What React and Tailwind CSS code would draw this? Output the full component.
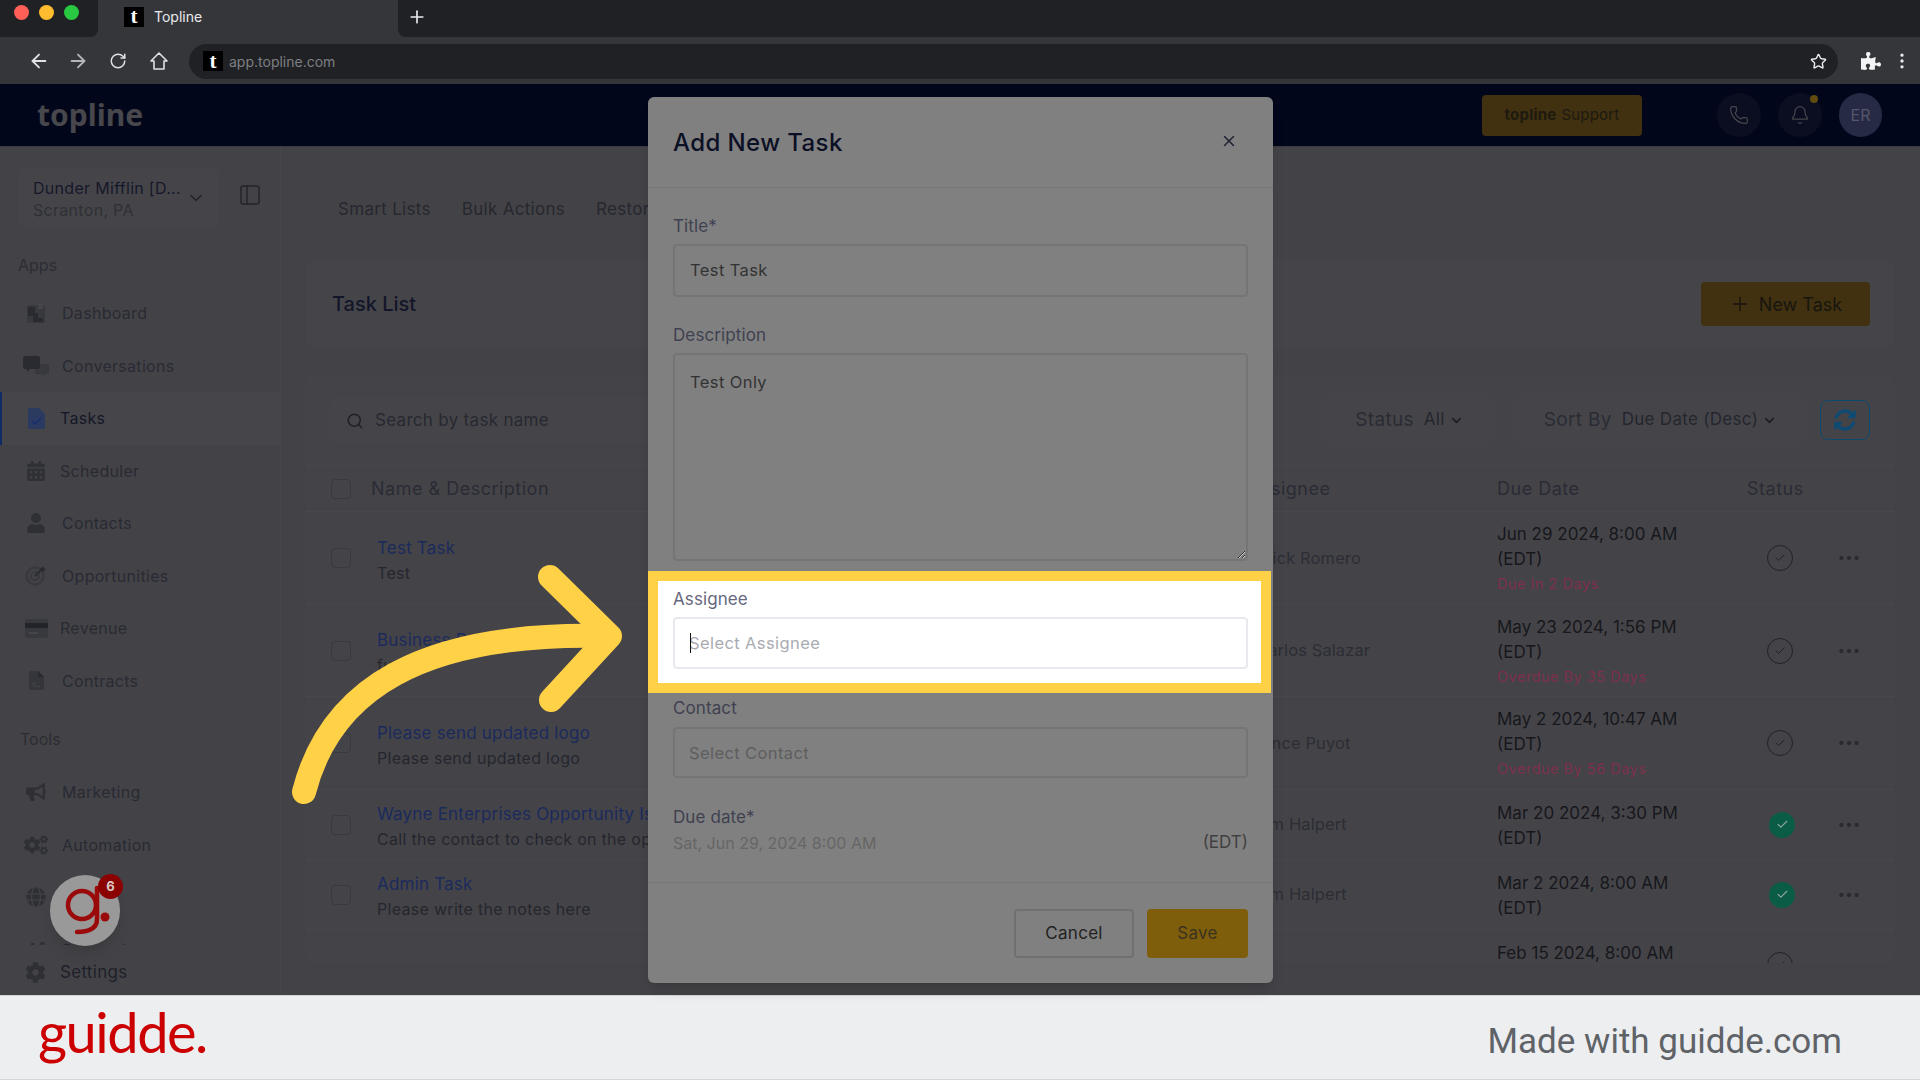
// Add New Task modal over the Topline task list, in a browser frame
import { ArrowLeft, ArrowRight, RotateCw, Star, EllipsisVertical, Plus, Search, Check, X, Phone, Bell, ChevronDown, PanelLeft, Ellipsis } from 'lucide-react';
import { FaPuzzlePiece, FaCalendarAlt, FaUser, FaBullhorn, FaCogs, FaGlobe, FaCog, FaChevronDown, FaSyncAlt } from 'react-icons/fa';

// two-tone sidebar icons
const DashboardIcon = () => (
  <svg width="22" height="22" viewBox="0 0 22 22">
    <rect x="2" y="3" width="18" height="18" rx="2" fill="#38393e" />
    <path d="M3 5h7v6h3v5h5v4H8v-6H3z" fill="#2a2b31" />
    <path d="M13 2h5v5h-5z" fill="#46464a" />
  </svg>
);
const ChatIcon = () => (
  <svg width="26" height="20" viewBox="0 0 26 20">
    <path d="M12 8h12a2 2 0 0 1 2 2v6a2 2 0 0 1-2 2h-2l-2 2-2-2h-6z" fill="#38393e" />
    <path d="M2 0h13a2 2 0 0 1 2 2v9a2 2 0 0 1-2 2H7l-3 3v-3H2a2 2 0 0 1-2-2V2a2 2 0 0 1 2-2z" fill="#2a2b31" />
  </svg>
);
const TaskIcon = () => (
  <svg width="17" height="21" viewBox="0 0 17 21" fill="none">
    <path d="M2 0h9l6 6v13a2 2 0 0 1-2 2H2a2 2 0 0 1-2-2V2a2 2 0 0 1 2-2z" fill="#2a3a60" />
    <path d="M4 13l3 3 6-6" stroke="#16306e" strokeWidth="1.6" />
  </svg>
);
const TargetIcon = () => (
  <svg width="22" height="21" viewBox="0 0 22 21" fill="none">
    <circle cx="10" cy="11" r="8.5" stroke="#38393e" strokeWidth="2.4" />
    <circle cx="10" cy="11" r="4" stroke="#38393e" strokeWidth="2" />
    <path d="M10 11l7-7" stroke="#2a2b31" strokeWidth="2" />
    <path d="M15 4l3-3 1 2 2 1-3 3z" fill="#2a2b31" />
  </svg>
);
const CardIcon = () => (
  <svg width="23" height="19" viewBox="0 0 23 19">
    <rect x="0" y="0" width="23" height="19" rx="2" fill="#38393e" />
    <rect x="0" y="4" width="23" height="5" fill="#232429" />
    <rect x="4" y="13" width="9" height="2" fill="#46464a" />
  </svg>
);
const ContractIcon = () => (
  <svg width="15" height="19" viewBox="0 0 15 19" fill="none">
    <path d="M2 0h7l6 6v11a2 2 0 0 1-2 2H2a2 2 0 0 1-2-2V2a2 2 0 0 1 2-2z" fill="#35363b" />
    <path d="M9 0l6 6H9z" fill="#2a2b31" />
    <path d="M3 15c2-5 3-5 3-1s2 1 5 1" stroke="#46464a" />
  </svg>
);
const SolidIcon = ({ Icon, size = 20 }) => <Icon size={size} className="text-[#2f3034]" />;

const apps = [
  { label: 'Dashboard', icon: <DashboardIcon /> },
  { label: 'Conversations', icon: <ChatIcon /> },
  { label: 'Tasks', icon: <TaskIcon />, active: true },
  { label: 'Scheduler', icon: <SolidIcon Icon={FaCalendarAlt} />, gap: 'ml-[11px]' },
  { label: 'Contacts', icon: <SolidIcon Icon={FaUser} /> },
  { label: 'Opportunities', icon: <TargetIcon /> },
  { label: 'Revenue', icon: <CardIcon />, gap: 'ml-[11px]' },
  { label: 'Contracts', icon: <ContractIcon /> },
];

const tools = [
  { label: 'Marketing', icon: <SolidIcon Icon={FaBullhorn} /> },
  { label: 'Automation', icon: <SolidIcon Icon={FaCogs} size={24} /> },
  { label: 'Sites', icon: <SolidIcon Icon={FaGlobe} /> },
  { label: 'Reputation', icon: <SolidIcon Icon={FaCogs} /> },
];

const tasks = [
  { id: 1, h: 'h-[93px]', title: 'Test Task', sub: 'Test', who: 'Erick Romero', date: 'Jun 29 2024, 8:00 AM', note: 'Due In 2 Days' },
  { id: 2, h: 'h-[92px]', title: 'Business Proposal', sub: 'fu', who: 'Carlos Salazar', date: 'May 23 2024, 1:56 PM', note: 'Overdue By 35 Days' },
  { id: 3, h: 'h-[93px]', title: 'Please send updated logo', sub: 'Please send updated logo', who: 'Vince Puyot', date: 'May 2 2024, 10:47 AM', note: 'Overdue By 56 Days' },
  { id: 4, h: 'h-[70px]', title: 'Wayne Enterprises Opportunity Is Closing', sub: 'Call the contact to check on the opportunity', who: 'Jim Halpert', date: 'Mar 20 2024, 3:30 PM', done: true },
  { id: 5, h: 'h-[70px]', title: 'Admin Task', sub: 'Please write the notes here', who: 'Jim Halpert', date: 'Mar 2 2024, 8:00 AM', done: true },
  { id: 6, h: 'h-[70px]', title: '', sub: '', who: '', date: 'Feb 15 2024, 8:00 AM', blank: true },
];

function Favicon({ className }) {
  return (
    <div className={`flex items-center justify-center bg-black text-white font-bold text-[21px] leading-none font-['Liberation_Serif',serif] ${className}`}>t</div>
  );
}

function NavItem({ label, icon, active, gap = 'ml-[13px]' }) {
  return (
    <div className={`flex items-center h-[52.5px] ${active ? 'border-l-2 border-[#0f2a66] bg-[#46464a] pl-[21px]' : 'pl-[23px]'}`}>
      <div className="w-[26px] flex justify-center">{icon}</div>
      <span className={`${active ? 'ml-[11px] text-[#141728]' : `${gap} text-[#292a33]`} text-[16px] tracking-[0.3px]`}>{label}</span>
    </div>
  );
}

function Field({ label, children, className = '' }) {
  return (
    <div className={className}>
      <div className="h-5 leading-5 text-[17px] tracking-[0.1px] text-[#3f4150]">{label}</div>
      {children}
    </div>
  );
}

function TaskRow({ task }) {
  return (
    <div className={`grid grid-cols-[46px_879px_241px_250px_80px_60px] items-center border-b border-[#48484c] pl-[25px] ${task.h}`}>
      <div className={`w-5 h-5 rounded border border-[#39393e] ${task.blank ? 'invisible' : ''}`} />
      <div className="whitespace-nowrap overflow-hidden pt-[5px]">
        <div className="text-[17px] leading-[25px] tracking-[0.2px] text-[#1b2a5c]">{task.title}</div>
        <div className="text-[16px] leading-[25px] tracking-[0.3px] text-[#25262e]">{task.sub}</div>
      </div>
      <div className="text-[16.5px] tracking-[0.1px] text-[#2c2d35]">{task.who}</div>
      <div className="pt-[2px] text-[17px] leading-[25px] text-[#17171c]">
        <div>{task.date}</div>
        <div>(EDT)</div>
        {task.note && <div className="text-[14.5px] leading-[24px] tracking-[0.5px] text-[#7d2f4c]">{task.note}</div>}
      </div>
      <div className="pl-[20px]">
        {task.done ? (
          <div className="w-[26px] h-[26px] rounded-full bg-[#0b5c47] flex items-center justify-center ml-[2px]">
            <Check size={13} className="text-[#8fa8a0]" />
          </div>
        ) : (
          <div className="w-[26px] h-[26px] rounded-full border-[1.5px] border-[#222226] flex items-center justify-center">
            <Check size={12} className="text-[#222226]" />
          </div>
        )}
      </div>
      <div className="pl-[9px]">
        {!task.blank && <Ellipsis size={26} className="text-[#2a2b30]" />}
      </div>
    </div>
  );
}

function Filter({ label, value, className }) {
  return (
    <div className={`flex items-center justify-center h-[52px] rounded-lg border border-[#46464a] bg-[#454549] ${className}`}>
      <span className="text-[19px] tracking-[0.3px] text-[#2a2b34]">{label}</span>
      <span className="ml-[10px] text-[17px] tracking-[0.3px] text-[#24252e]">{value}</span>
      <FaChevronDown size={11} className="ml-[6px] text-[#1d1e26]" />
    </div>
  );
}

export default function App() {
  return (
    <div className="relative flex flex-col h-screen overflow-hidden bg-[#434347] font-['Inter',sans-serif]">
      {/* browser tab strip */}
      <div className="flex h-[37px] bg-[#35363a] shrink-0">
        <div className="flex items-start gap-[10px] w-[98px] h-full pl-[14px] pt-[5px] bg-[#202124] rounded-br-lg">
          <div className="w-[15px] h-[15px] rounded-full bg-[#ff5f57]" />
          <div className="w-[15px] h-[15px] rounded-full bg-[#febc2e]" />
          <div className="w-[15px] h-[15px] rounded-full bg-[#28c840]" />
        </div>
        <div className="flex items-center w-[300px] pl-[26px] pb-[4px]">
          <Favicon className="w-5 h-5" />
          <span className="ml-[10px] text-[14px] text-[#e8eaed]">Topline</span>
        </div>
        <div className="flex-1 flex items-center pl-[9px] pb-[3px] bg-[#202124] rounded-bl-lg">
          <Plus size={20} className="text-[#e8eaed]" />
        </div>
      </div>

      {/* browser toolbar */}
      <div className="flex items-center h-[47px] bg-[#35363a] shrink-0 pl-[28px] pt-[1px]">
        <ArrowLeft size={22} className="text-[#dfe1e5]" />
        <ArrowRight size={22} className="ml-[17px] text-[#b4b6ba]" />
        <RotateCw size={18} className="ml-[20px] text-[#dfe1e5]" />
        <svg width="20" height="20" viewBox="0 0 20 20" fill="none" stroke="#dfe1e5" strokeWidth="1.6" className="ml-[22px]">
          <path d="M10 2 2 10h3v8h10v-8h3z" strokeLinejoin="round" />
        </svg>
        <div className="flex items-center ml-[20px] w-[1649px] h-[35px] rounded-full bg-[#202124] pl-[14px]">
          <Favicon className="w-5 h-5" />
          <span className="ml-[6px] text-[14px] text-[#7d7f82]">app.topline.com</span>
          <Star size={17} className="ml-auto mr-[11px] text-[#e8eaed]" />
        </div>
        <FaPuzzlePiece size={20} className="ml-[23px] text-[#f1f3f4]" />
        <EllipsisVertical size={20} className="ml-[11px] text-[#e8eaed]" />
      </div>

      {/* app header */}
      <div className="flex items-center h-[63px] bg-[#02061a] shrink-0 border-b border-[#3a3a40] pl-[37px]">
        <span className="text-[30px] font-bold -mt-[2px] text-[#47474c] font-['Noto_Sans',sans-serif]">topline</span>
        <div className="ml-auto flex items-center justify-center w-[160px] h-[41px] rounded bg-[#413110] text-[15px] tracking-[0.2px] text-[#1d1a10]">
          <span className="font-bold">topline</span>
          <span className="ml-[5px]">Support</span>
        </div>
        <div className="relative ml-[75px] w-[44px] h-[44px] rounded-full bg-[#0a0e20] flex items-center justify-center">
          <Phone size={20} strokeWidth={1.5} className="text-[#45464c]" />
        </div>
        <div className="relative ml-[17px] w-[44px] h-[44px] rounded-full bg-[#0a0e20] flex items-center justify-center">
          <Bell size={20} strokeWidth={1.5} className="text-[#45464c]" />
          <div className="absolute right-[4px] top-[2px] w-[8px] h-[8px] rounded-full bg-[#5f4a10]" />
        </div>
        <div className="ml-[17px] mr-[38px] w-[43px] h-[44px] rounded-full bg-[#262a45] flex items-center justify-center text-[16px] text-[#55566a]">ER</div>
      </div>

      {/* app body */}
      <div className="flex flex-1 min-h-0">
        <aside className="flex flex-col w-[281px] shrink-0 border-r border-[#46464b]">
          <div className="flex items-center pt-[20px] pl-[18px]">
            <div className="relative w-[201px] h-[61px] rounded-lg bg-[#454549] pl-[15px] pt-[10px]">
              <div className="text-[16px] leading-[22px] tracking-[0.3px] text-[#16182a]">Dunder Mifflin [D...</div>
              <div className="text-[16px] leading-[22px] tracking-[0.3px] text-[#2f3036]">Scranton, PA</div>
              <ChevronDown size={20} className="absolute right-[13px] top-[21px] text-[#24252c]" />
            </div>
            <PanelLeft size={24} strokeWidth={1.5} className="ml-[19px] -mt-[6px] text-[#24252c]" />
          </div>
          <div className="h-[20px] mt-[27px] ml-[18px] leading-5 text-[16px] text-[#2c2d33]">Apps</div>
          <div className="flex-1 min-h-0 overflow-hidden mt-[12px]">
            {apps.map(item => <NavItem key={item.label} {...item} />)}
            <div className="h-[20px] mt-[22px] mb-[17px] ml-[20px] leading-5 text-[16px] text-[#2c2d33]">Tools</div>
            {tools.map(item => <NavItem key={item.label} {...item} />)}
          </div>
          <div className="flex items-center h-[50px] pl-[25px] pt-[5px]">
            <FaCog size={21} className="text-[#2f3034]" />
            <span className="ml-[14px] text-[17px] tracking-[0.3px] text-[#1e1f2a]">Settings</span>
          </div>
        </aside>

        <main className="flex-1 min-w-0 pl-[25px] pr-[26px]">
          <div className="flex items-center gap-[31px] h-[50px] mt-[36px] pl-[32px] pt-[3px] text-[17px] tracking-[0.3px] text-[#26272f] rounded-lg">
            <span>Smart Lists</span>
            <span>Bulk Actions</span>
            <span>Restore</span>
          </div>

          <div className="flex items-center justify-between h-[88px] mt-[27px] px-[26px] pr-[24px] rounded-lg bg-[#454549]">
            <h1 className="text-[20px] font-medium text-[#13162a]">Task List</h1>
            <div className="flex items-center justify-center gap-[8px] w-[169px] h-[44px] rounded bg-[#413110] text-[18px] text-[#17150f]">
              <Plus size={22} strokeWidth={1.6} />
              New Task
            </div>
          </div>

          <div className="h-[588px] mt-[27px] rounded-lg bg-[#444448] overflow-hidden">
            <div className="flex items-center h-[90px] pl-[24px] pr-[24px]">
              <div className="flex items-center w-[500px] h-[48px] pl-[16px] pt-[1px] rounded-lg bg-[#454549]">
                <Search size={18} className="text-[#1f2026]" />
                <span className="ml-[11px] text-[17px] tracking-[0.3px] text-[#272831]">Search by task name</span>
              </div>
              <Filter label="Status" value="All" className="ml-auto w-[175px]" />
              <Filter label="Sort By" value="Due Date (Desc)" className="ml-[16px] w-[295px]" />
              <div className="ml-[13px] flex items-center justify-center w-[50px] h-[40px] rounded-lg border border-[#0b4a6f]">
                <FaSyncAlt size={22} className="text-[#0e4a72]" />
              </div>
            </div>
            <div className="grid grid-cols-[40px_877px_249px_250px_1fr] items-center h-[47px] pl-[25px] border-y border-[#48484c] text-[18px] tracking-[0.5px] text-[#2a2b35]">
              <div className="w-5 h-5 rounded border border-[#39393e]" />
              <div>Name &amp; Description</div>
              <div>Assignee</div>
              <div>Due Date</div>
              <div>Status</div>
            </div>
            {tasks.map(task => <TaskRow key={task.id} task={task} />)}
          </div>
        </main>
      </div>

      {/* guidde footer */}
      <div className="flex items-center justify-between h-[85px] shrink-0 bg-[#eceef0] border-y border-[#d5d6d8] pl-[38px] pr-[78px]">
        <span className="text-[56px] leading-none tracking-[-1.5px] text-[#cc0000] font-['Lato',sans-serif] -mt-[12px]">guidde.</span>
        <span className="text-[35px] mt-[9px] text-[#5f6368] font-['Roboto',sans-serif]">Made with guidde.com</span>
      </div>

      {/* modal */}
      <div className="absolute left-[648px] top-[97px] w-[625px] rounded-md bg-[#808080] shadow-lg">
        <div className="flex items-center justify-between h-[91px] pl-[25px] pr-[35px] pt-[2px] border-b border-[#777777]">
          <h2 className="text-[24px] font-medium tracking-[0.4px] text-[#0c1024]">Add New Task</h2>
          <X size={18} className="-mt-[4px] text-[#1c2030]" />
        </div>
        <div className="px-[25px] pt-[28px]">
          <Field label="Title*">
            <input readOnly value="Test Task" className="w-full h-[53px] mt-2 px-[15px] pb-[1px] rounded border-2 border-[#757575] bg-transparent text-[16.5px] tracking-[0.4px] text-[#333333] outline-none" />
          </Field>
          <Field label="Description" className="mt-[28px]">
            <textarea readOnly value="Test Only" className="block w-full h-[208px] mt-2 px-[15px] py-[15px] rounded border-2 border-[#757575] bg-transparent text-[16.5px] tracking-[0.4px] text-[#333333] outline-none" />
          </Field>

          {/* highlighted step target */}
          <div className="relative -ml-[25px] -mr-[23px] mt-[10px] h-[122px] border-[10px] border-[#ffd147] bg-white pl-[15px] pr-[13px] pt-[8px]">
            <div className="h-5 leading-5 text-[17px] tracking-[0.1px] text-[#66687e]">Assignee</div>
            <input readOnly placeholder="Select Assignee" className="w-full h-[52px] mt-2 px-[14px] rounded border-2 border-[#e8e9ee] bg-white text-[16.5px] tracking-[0.4px] placeholder:text-[#a9abb2] outline-none" />
            <div className="absolute left-[32px] top-[52px] w-[1px] h-[20px] bg-[#111111]" />
          </div>

          <Field label="Contact" className="mt-[5px]">
            <input readOnly placeholder="Select Contact" className="w-full h-[51px] mt-[9px] px-[14px] rounded border-2 border-[#757575] bg-transparent text-[16.5px] tracking-[0.4px] placeholder:text-[#5e5e5e] outline-none" />
          </Field>
          <Field label="Due date*" className="mt-[29px]">
            <div className="flex justify-between items-center h-5 mt-[6px] text-[16px]">
              <span className="text-[#666666]">Sat, Jun 29, 2024 8:00 AM</span>
              <span className="text-[17px] text-[#404040]">(EDT)</span>
            </div>
          </Field>
        </div>
        <div className="flex justify-end gap-[13px] mt-[29px] pt-[26px] pb-[25px] pl-[25px] pr-[25px] border-t border-[#777777]">
          <div className="flex items-center justify-center w-[120px] h-[49px] rounded border-2 border-[#707070] text-[17px] tracking-[0.3px] text-[#222222]">Cancel</div>
          <div className="flex items-center justify-center w-[101px] h-[49px] rounded bg-[#7f5e0b] text-[17px] tracking-[0.3px] text-[#3a3220]">Save</div>
        </div>
      </div>

      {/* guidde arrow */}
      <svg className="absolute left-0 top-0 pointer-events-none" width="1920" height="1080" fill="none" stroke="#ffd147" strokeWidth="24" strokeLinecap="round" strokeLinejoin="round">
        <path d="M304 792C330 690 420 632 604 636" />
        <path d="M550 577 610 636 551 700" />
      </svg>

      {/* guidde launcher */}
      <div className="absolute left-[50px] top-[875px] w-[70px] h-[71px] rounded-full bg-[#999999] shadow-lg">
        <svg width="70" height="71" viewBox="0 0 70 71" fill="none" stroke="#9b0a0a" strokeWidth="4.5" strokeLinecap="round">
          <circle cx="32" cy="30" r="14" />
          <path d="M47 13V44Q47 57 27 57" />
          <circle cx="55" cy="42" r="4.5" fill="#9b0a0a" stroke="none" />
        </svg>
        <div className="absolute -right-[3px] -top-[1px] w-[25px] h-[25px] rounded-full bg-[#8b0000] flex items-center justify-center text-[13px] font-bold text-[#d8c8c8]">6</div>
      </div>
    </div>
  );
}
